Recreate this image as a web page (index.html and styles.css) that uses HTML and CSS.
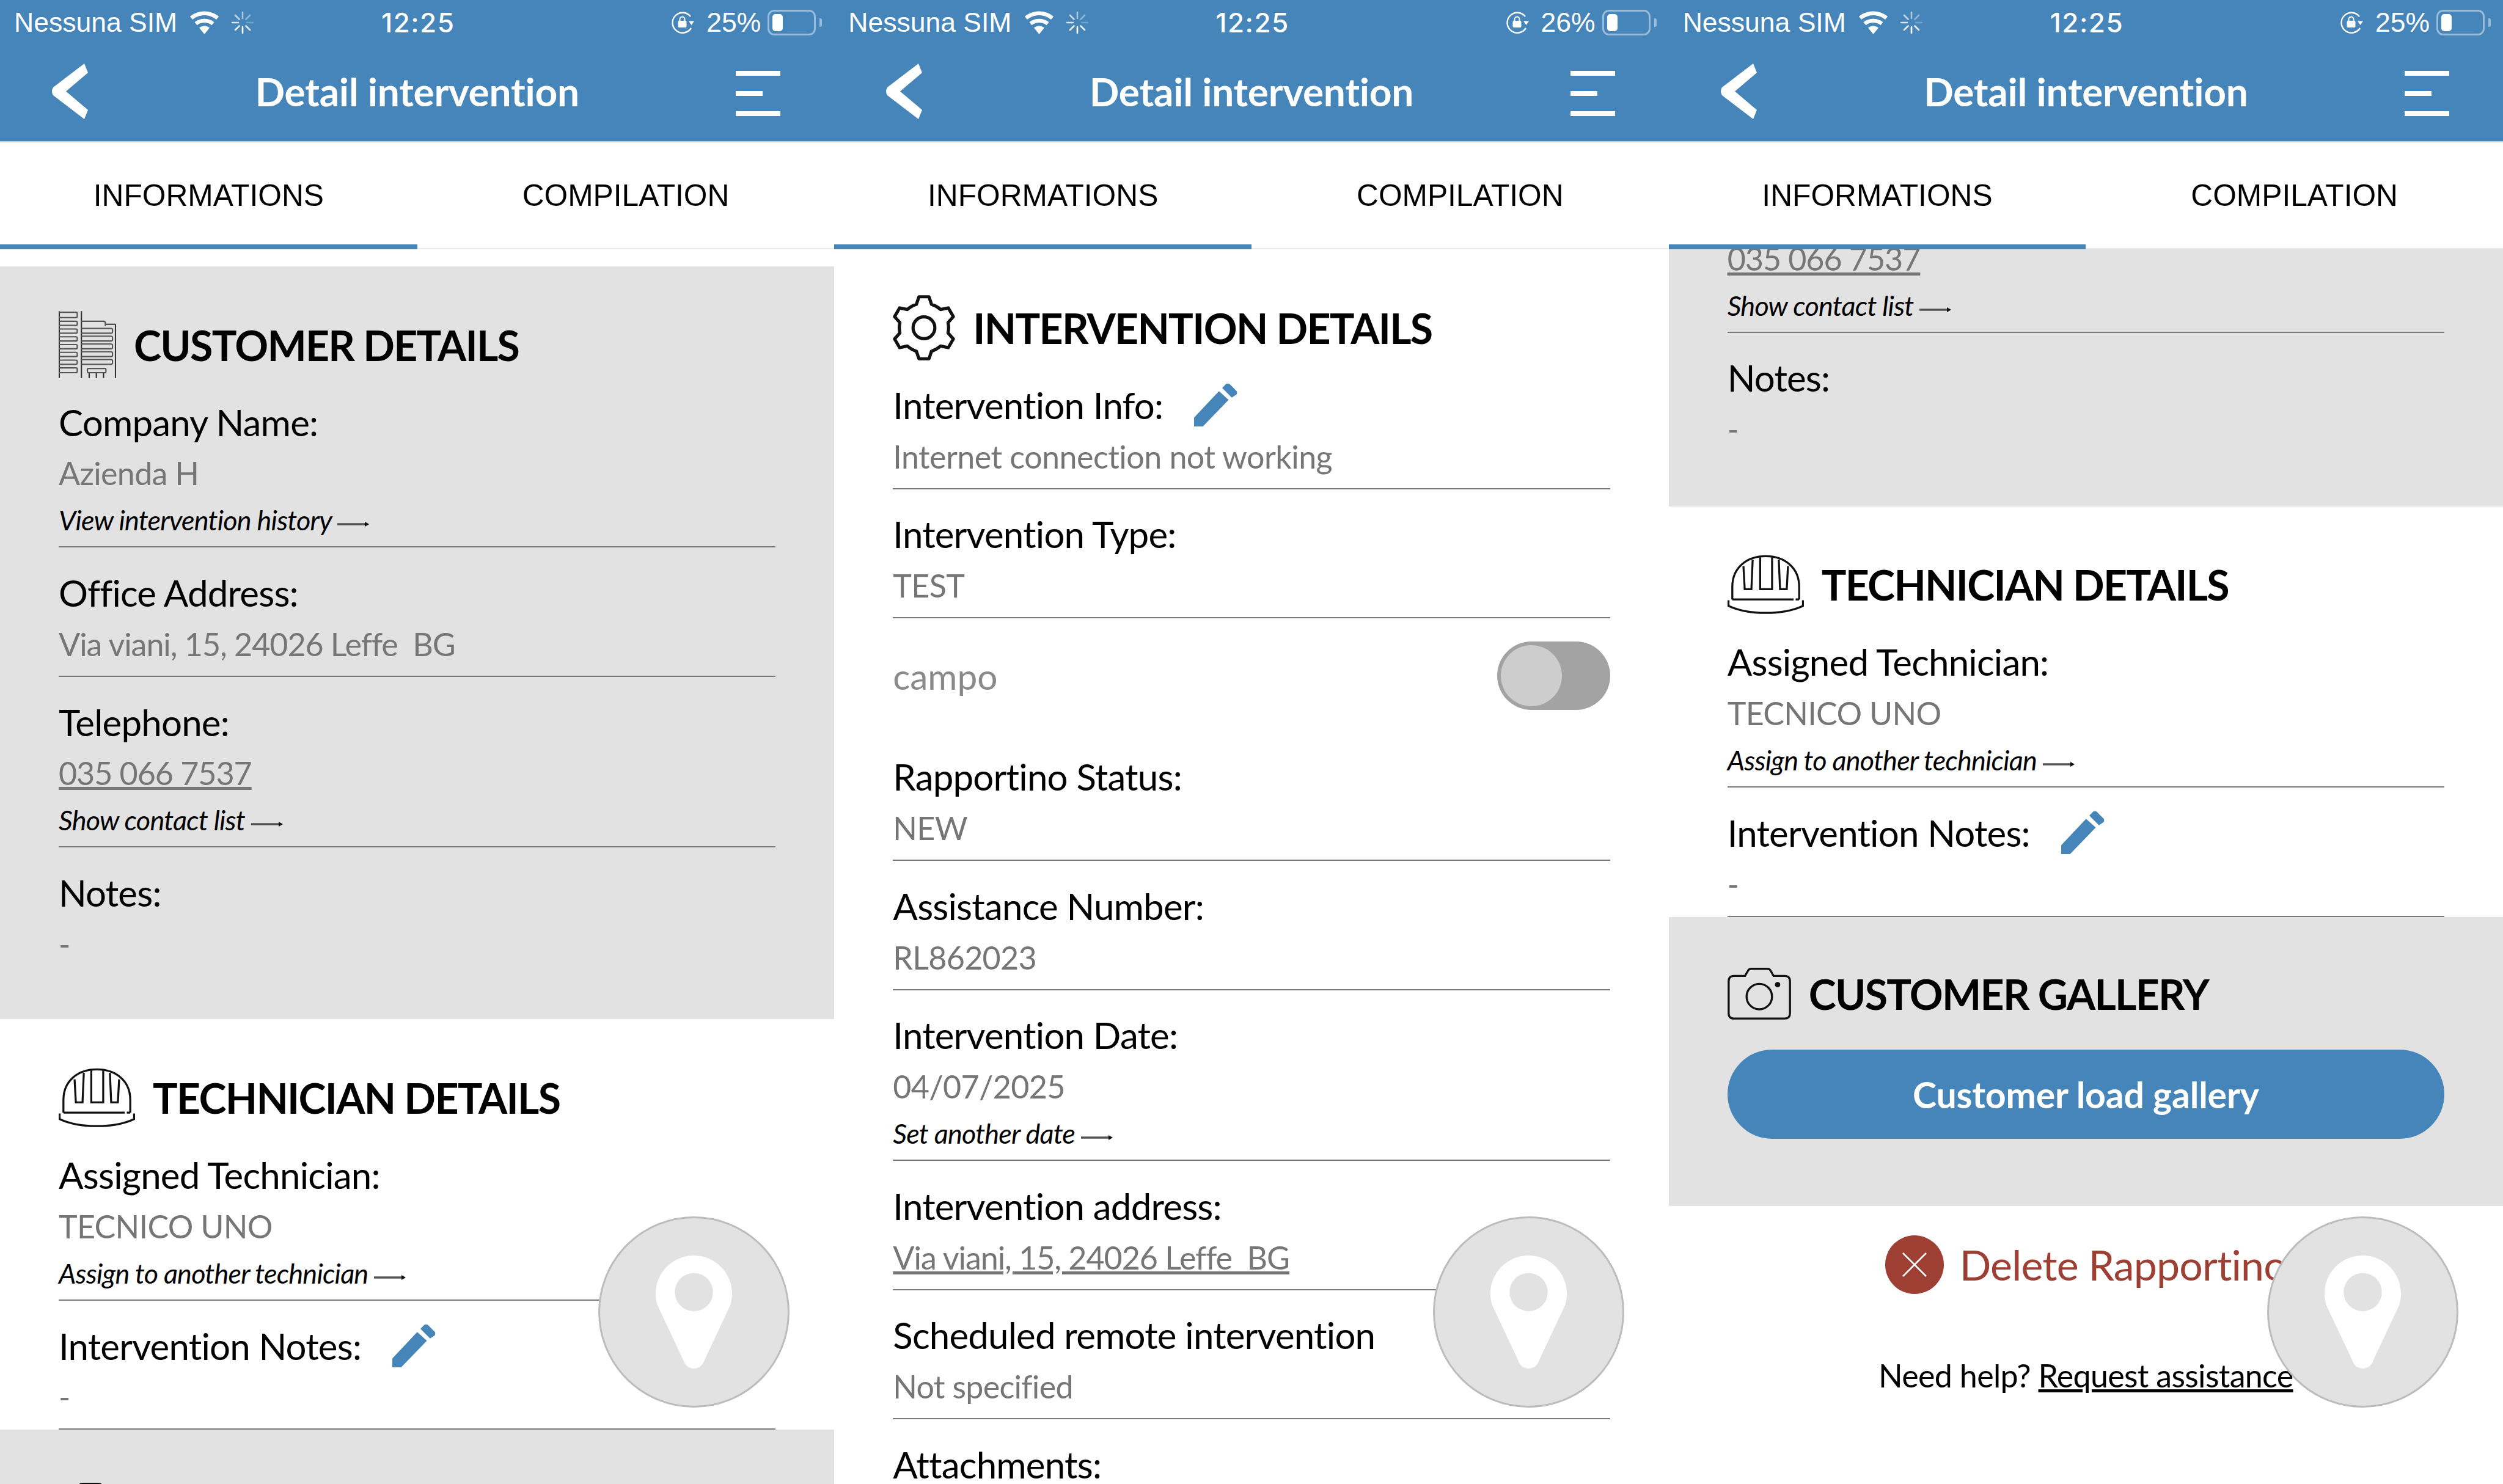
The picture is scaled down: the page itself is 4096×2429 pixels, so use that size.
FILE: index.html
```html
<!DOCTYPE html>
<html lang="en">
<head>
<meta charset="utf-8">
<title>Detail intervention</title>
<link rel="stylesheet" href="styles.css">
</head>
<body>
<svg class="defs" aria-hidden="true">
  <symbol id="i-wifi" viewBox="0 0 55 39">
    <path d="M27.5 39 19 28.5C24 24.5 31 24.5 36 28.5Z" fill="#fff"/>
    <path d="M15.5 24.2 11.5 19.2C20.5 11.8 34.5 11.8 43.5 19.2L39.5 24.2C32.5 18.6 22.5 18.6 15.5 24.2Z" fill="#fff"/>
    <path d="M8 15 4 10C17.5-1.5 37.5-1.5 51 10L47 15C35.5 5.5 19.5 5.5 8 15Z" fill="#fff"/>
  </symbol>
  <symbol id="i-spin" viewBox="0 0 38 38">
    <g stroke="#fff" stroke-width="2.6" stroke-linecap="round">
      <path d="M19 2V12" opacity=".55"/><path d="M31 7 24.500 13.500" opacity=".4"/><path d="M36 19H26" opacity=".25"/>
      <path d="M31 31 24.500 24.500" opacity=".9"/><path d="M19 36V26"/><path d="M7 31 13.500 24.500" opacity=".95"/>
      <path d="M2 19H12" opacity=".8"/><path d="M7 7 13.500 13.500" opacity=".7"/>
    </g>
  </symbol>
  <symbol id="i-lock" viewBox="0 0 38 38">
    <path d="M32 9A16.500 16.500 0 1 0 33 28" fill="none" stroke="#fff" stroke-width="2.4"/>
    <path d="M29 16.500 38 16.500 33.500 23Z" fill="#fff"/>
    <rect x="11.500" y="16" width="14" height="11" rx="2" fill="#fff"/>
    <path d="M14.500 16.500V13.500A4 4 0 0 1 22.500 13.500V16.500" fill="none" stroke="#fff" stroke-width="2"/>
  </symbol>
  <symbol id="i-back" viewBox="0 0 59 91">
    <path d="M53 0 59 15 23 45.500 59 76 53 91 2 52Q-2 45.500 2 39Z" fill="#fff"/>
  </symbol>
  <symbol id="i-arrow" viewBox="0 0 52 10">
    <path d="M0 5H46" stroke="#555" stroke-width="3.400"/>
    <path d="M45 1 52 5 45 9Z" fill="#111"/>
  </symbol>
  <symbol id="i-pencil" viewBox="0 0 27 27">
    <path d="M0 27V21.500L15.500 5 21.500 10.500 5.500 27Z" fill="#4585b9"/>
    <path d="M17.500 3 20 .5Q21 0 22 .5L26.500 5Q27 6 26.500 7L23.500 9Z" fill="#4585b9"/>
  </symbol>
  <symbol id="i-pin" viewBox="0 0 48 71">
    <path d="M24 0C37.300 0 48 10.700 48 24C48 27 47.500 29 47 31L31 65C29.500 69.500 27 71 24 71C21 71 18.500 69.500 17 65L1 31C.5 29 0 27 0 24C0 10.700 10.700 0 24 0Z" fill="#fff"/>
    <circle cx="24" cy="23" r="12" fill="#e2e2e2"/>
  </symbol>
  <symbol id="i-building" viewBox="0 0 96 112">
    <g fill="none" stroke="#555" stroke-width="2.200">
      <path d="M1 0V112M38 0V112M95 22V112M78 22H95" stroke="#333"/>
      <path d="M1 2H29Q31 2 31 4V9Q31 11 29 11H1M1 17H29Q31 17 31 19V22Q31 24 29 24H1M1 30H29Q31 30 31 32V35Q31 37 29 37H1M1 43H29Q31 43 31 45V48Q31 50 29 50H1M1 56H29Q31 56 31 58V61Q31 63 29 63H1M1 69H29Q31 69 31 71V74Q31 76 29 76H1M1 82H29Q31 82 31 84V87Q31 89 29 89H1M1 95H29Q31 95 31 97V101Q31 103 29 103H1"/>
      <path d="M38 17H75Q78 17 78 20V25M38 29H87Q90 29 90 31V35Q90 37 87 37H38M38 42H87Q90 42 90 44V48Q90 50 87 50H38M38 55H87Q90 55 90 57V61Q90 63 87 63H38M38 68H87Q90 68 90 70V74Q90 76 87 76H38M38 81H87Q90 81 90 83V87Q90 89 87 89H38"/>
      <rect x="48" y="96" width="31" height="7" rx="2"/>
      <path d="M51 103V112M63 103V112M75 103V112" stroke="#333"/>
    </g>
  </symbol>
  <symbol id="i-helmet" viewBox="0 0 48 37">
    <g fill="none" stroke="#111" stroke-width="1.250">
      <path d="M3 28V20C3 8 12 .8 24 .8S45 8 45 20V28"/>
      <path d="M3 28H41.500M42.800 28H45"/>
      <path d="M.6 28.500V32Q10 36.400 24 36.400T47.400 32V28.500"/>
      <path d="M20.500 1.500V21.500H28V1.500"/>
      <path d="M10 7 10.800 21.500H15L15.800 3M38 7 37.200 21.500H33L32.200 3"/>
    </g>
  </symbol>
  <symbol id="i-gear" viewBox="1.500 .5 37 39">
    <g fill="none" stroke="#111" stroke-width="1.900" stroke-linejoin="round">
      <path d="M15.500 6 17 1.500H23L24.500 6A14.700 14.700 0 0 1 29.870 9.100L34.520 8.150 37.520 13.350 34.370 16.900A14.700 14.700 0 0 1 34.370 23.100L37.520 26.650 34.520 31.850 29.870 30.900A14.700 14.700 0 0 1 24.500 34L23 38.500H17L15.500 34A14.700 14.700 0 0 1 10.130 30.900L5.480 31.850 2.480 26.650 5.630 23.100A14.700 14.700 0 0 1 5.630 16.900L2.480 13.350 5.480 8.150 10.130 9.100A14.700 14.700 0 0 1 15.500 6Z"/>
      <circle cx="20" cy="20" r="6.500"/>
    </g>
  </symbol>
  <symbol id="i-camera" viewBox="0 0 40 33">
    <g fill="none" stroke="#111" stroke-width="1.300">
      <path d="M4 5.500H11L13 2Q13.500 1 15 1H25Q26.500 1 27 2L29 5.500H36Q39.300 5.500 39.300 9V29Q39.300 32.300 36 32.300H4Q.7 32.300.7 29V9Q.7 5.500 4 5.500Z"/>
      <circle cx="20" cy="18.500" r="8"/>
    </g>
    <circle cx="31.500" cy="11" r="1.700" fill="#111"/>
  </symbol>
</svg>

<main class="screens">

  <section class="phone">
    <div class="status">
      <div class="status-left">Nessuna SIM <svg class="ic-wifi"><use href="#i-wifi"/></svg><svg class="ic-spin"><use href="#i-spin"/></svg></div>
      <div class="status-time">12:25</div>
      <div class="status-right"><svg class="ic-lock"><use href="#i-lock"/></svg><span>25%</span><div class="battery"><div class="battery-level"></div></div></div>
    </div>
    <header class="navbar">
      <svg class="ic-back"><use href="#i-back"/></svg>
      <h1 class="nav-title">Detail intervention</h1>
      <div class="menu"><i></i><i class="short"></i><i></i></div>
    </header>
    <nav class="tabs"><div class="tab active">INFORMATIONS</div><div class="tab">COMPILATION</div></nav>
    <div class="content">
      <section class="block gray first">
        <h2 class="block-title"><svg class="ic-building"><use href="#i-building"/></svg>CUSTOMER DETAILS</h2>
        <div class="field"><div class="label">Company Name:</div><div class="value">Azienda H</div><div class="more">View intervention history <svg class="ic-arrow"><use href="#i-arrow"/></svg></div></div>
        <div class="field"><div class="label">Office Address:</div><div class="value addr">Via viani, 15, 24026 Leffe&nbsp; BG</div></div>
        <div class="field"><div class="label">Telephone:</div><div class="value"><u>035 066 7537</u></div><div class="more">Show contact list <svg class="ic-arrow"><use href="#i-arrow"/></svg></div></div>
        <div class="field plain"><div class="label">Notes:</div><div class="value">-</div></div>
      </section>
      <section class="block">
        <h2 class="block-title"><svg class="ic-helmet"><use href="#i-helmet"/></svg>TECHNICIAN DETAILS</h2>
        <div class="field"><div class="label">Assigned Technician:</div><div class="value">TECNICO UNO</div><div class="more">Assign to another technician <svg class="ic-arrow"><use href="#i-arrow"/></svg></div></div>
        <div class="field"><div class="label">Intervention Notes:<svg class="ic-pencil"><use href="#i-pencil"/></svg></div><div class="value">-</div></div>
      </section>
      <section class="block gray">
        <div class="block-title"><svg class="ic-camera"><use href="#i-camera"/></svg></div>
      </section>
    </div>
    <div class="fab"><svg class="ic-pin"><use href="#i-pin"/></svg></div>
  </section>

  <section class="phone">
    <div class="status">
      <div class="status-left">Nessuna SIM <svg class="ic-wifi"><use href="#i-wifi"/></svg><svg class="ic-spin"><use href="#i-spin"/></svg></div>
      <div class="status-time">12:25</div>
      <div class="status-right"><svg class="ic-lock"><use href="#i-lock"/></svg><span>26%</span><div class="battery"><div class="battery-level"></div></div></div>
    </div>
    <header class="navbar">
      <svg class="ic-back"><use href="#i-back"/></svg>
      <h1 class="nav-title">Detail intervention</h1>
      <div class="menu"><i></i><i class="short"></i><i></i></div>
    </header>
    <nav class="tabs"><div class="tab active">INFORMATIONS</div><div class="tab">COMPILATION</div></nav>
    <div class="content">
      <section class="block">
        <h2 class="block-title"><svg class="ic-gear"><use href="#i-gear"/></svg>INTERVENTION DETAILS</h2>
        <div class="field"><div class="label">Intervention Info:<svg class="ic-pencil"><use href="#i-pencil"/></svg></div><div class="value wide">Internet connection not working</div></div>
        <div class="field"><div class="label">Intervention Type:</div><div class="value">TEST</div></div>
        <div class="toggle-row"><span class="toggle-label">campo</span><div class="toggle"><div class="toggle-thumb"></div></div></div>
        <div class="field"><div class="label">Rapportino Status:</div><div class="value">NEW</div></div>
        <div class="field"><div class="label">Assistance Number:</div><div class="value">RL862023</div></div>
        <div class="field"><div class="label">Intervention Date:</div><div class="value">04/07/2025</div><div class="more">Set another date <svg class="ic-arrow"><use href="#i-arrow"/></svg></div></div>
        <div class="field"><div class="label">Intervention address:</div><div class="value"><u>Via viani, 15, 24026 Leffe&nbsp; BG</u></div></div>
        <div class="field"><div class="label">Scheduled remote intervention</div><div class="value">Not specified</div></div>
        <div class="field plain"><div class="label">Attachments:</div></div>
      </section>
    </div>
    <div class="fab"><svg class="ic-pin"><use href="#i-pin"/></svg></div>
  </section>

  <section class="phone">
    <div class="status">
      <div class="status-left">Nessuna SIM <svg class="ic-wifi"><use href="#i-wifi"/></svg><svg class="ic-spin"><use href="#i-spin"/></svg></div>
      <div class="status-time">12:25</div>
      <div class="status-right"><svg class="ic-lock"><use href="#i-lock"/></svg><span>25%</span><div class="battery"><div class="battery-level"></div></div></div>
    </div>
    <header class="navbar">
      <svg class="ic-back"><use href="#i-back"/></svg>
      <h1 class="nav-title">Detail intervention</h1>
      <div class="menu"><i></i><i class="short"></i><i></i></div>
    </header>
    <nav class="tabs"><div class="tab active">INFORMATIONS</div><div class="tab">COMPILATION</div></nav>
    <div class="content">
      <section class="block gray scrolled">
        <div class="field headless"><div class="value"><u>035 066 7537</u></div><div class="more">Show contact list <svg class="ic-arrow"><use href="#i-arrow"/></svg></div></div>
        <div class="field plain"><div class="label">Notes:</div><div class="value">-</div></div>
      </section>
      <section class="block">
        <h2 class="block-title"><svg class="ic-helmet"><use href="#i-helmet"/></svg>TECHNICIAN DETAILS</h2>
        <div class="field"><div class="label">Assigned Technician:</div><div class="value">TECNICO UNO</div><div class="more">Assign to another technician <svg class="ic-arrow"><use href="#i-arrow"/></svg></div></div>
        <div class="field"><div class="label">Intervention Notes:<svg class="ic-pencil"><use href="#i-pencil"/></svg></div><div class="value">-</div></div>
      </section>
      <section class="block gray gallery">
        <h2 class="block-title"><svg class="ic-camera"><use href="#i-camera"/></svg>CUSTOMER GALLERY</h2>
        <button class="gallery-btn">Customer load gallery</button>
      </section>
      <div class="delete-row">
        <svg class="ic-delete" viewBox="0 0 96 96"><circle cx="48" cy="48" r="48" fill="#9e3f33"/><path d="M29 29 67 67M67 29 29 67" stroke="#fff" stroke-width="2.600"/></svg>
        <span>Delete Rapportino</span>
      </div>
      <p class="help">Need help? <u>Request assistance</u></p>
    </div>
    <div class="fab"><svg class="ic-pin"><use href="#i-pin"/></svg></div>
  </section>

</main>
</body>
</html>
```

FILE: styles.css
```css
* { box-sizing: border-box; }
html, body { margin: 0; padding: 0; height: 100%; overflow: hidden; background: #fff; }
body { font-family: "Lato", "Liberation Sans", sans-serif; color: #000; }
.defs { position: absolute; width: 0; height: 0; }

.screens { display: grid; grid-template-columns: repeat(3, 1fr); height: 100vh; }
.phone { position: relative; display: flex; flex-direction: column; height: 100vh; overflow: hidden; background: #fff; }

/* status bar */
.status { display: grid; grid-template-columns: 1fr auto 1fr; align-items: center; height: 73px; padding: 0 20px 0 23px; background: #4585b9; color: #fff; font-family: "Liberation Sans", sans-serif; font-size: 44.5px; }
.status-left { display: flex; align-items: center; white-space: pre; }
.ic-wifi { width: 55px; height: 39px; margin-left: 5px; }
.ic-spin { width: 38px; height: 38px; margin-left: 16px; }
.status-time { font-family: "Inter", sans-serif; font-weight: 500; font-size: 44px; letter-spacing: 1.5px; }
.status-right { display: flex; align-items: center; justify-content: flex-end; }
.ic-lock { width: 38px; height: 38px; margin-right: 20px; }
.battery { position: relative; width: 79px; height: 42px; margin-left: 11px; margin-right: 10px; border: 3px solid rgba(255,255,255,.45); border-radius: 11px; }
.battery::after { content: ""; position: absolute; right: -13px; top: 11px; width: 4px; height: 14px; background: rgba(255,255,255,.45); border-radius: 0 3px 3px 0; }
.battery-level { position: absolute; left: 5px; top: 4px; width: 17px; height: 28px; background: #fff; border-radius: 5px; }

/* navbar */
.navbar { display: flex; align-items: center; justify-content: center; position: relative; height: 160px; background: #4585b9; border-bottom: 2px solid #cbc8c4; }
.ic-back { position: absolute; left: 85px; top: 31px; width: 59px; height: 91px; }
.nav-title { margin: 0 0 6px; font-size: 64px; font-weight: 700; letter-spacing: -.25px; color: #fff; }
.menu { position: absolute; right: 88px; top: 43px; display: flex; flex-direction: column; align-items: flex-start; gap: 25px; width: 73px; }
.menu i { display: block; width: 73px; height: 8px; background: #fff; }
.menu i.short { width: 44px; }

/* tabs */
.tabs { display: flex; height: 175px; flex: none; border-bottom: 2px solid #e8e8e8; }
.tab { flex: 1; display: flex; align-items: center; justify-content: center; font-family: "Liberation Sans", sans-serif; font-size: 49.7px; color: #000; }
.tab.active { margin-bottom: -2px; border-bottom: 8px solid #4585b9; padding-top: 6px; }

/* content */
.content { flex: 1; min-height: 0; overflow: hidden; }
.block { padding: 75.7px 96px 0; }
.block.gray { background: #e2e2e2; }
.block.first { margin-top: 27.6px; padding-bottom: 0; }
.block.scrolled { padding-top: 0; padding-bottom: 3px; }
.block-title { display: flex; align-items: center; gap: 29px; height: 105.5px; margin: 0; font-size: 68px; font-weight: 700; letter-spacing: -1.7px; white-space: nowrap; }
.ic-building { width: 94px; height: 110px; flex: none; }
.ic-helmet { width: 125px; height: 97px; flex: none; }
.ic-gear { width: 102px; height: 107px; flex: none; }
.ic-camera { width: 104px; height: 86px; flex: none; }

.field { padding: 32px 0 9px; border-bottom: 2px solid #7a7a7a; }
.field.plain { border-bottom: 0; padding-bottom: 80.5px; }
.field.headless { padding-top: 0; margin-top: -27.5px; }
.label { display: flex; align-items: center; height: 83.5px; font-size: 60px; letter-spacing: -.8px; white-space: nowrap; }
.value { height: 85px; line-height: 85px; font-size: 52px; letter-spacing: -.7px; color: #767676; white-space: nowrap; }
.value.wide { letter-spacing: -.55px; }
.value.addr, .value u { letter-spacing: -1.05px; }
.more { height: 68px; line-height: 68px; font-size: 45px; font-style: italic; letter-spacing: -.8px; white-space: nowrap; }
.ic-arrow { width: 52px; height: 10px; vertical-align: 5px; }
.ic-pencil { width: 71px; height: 71px; margin-left: 51px; }

.toggle-row { display: flex; align-items: center; justify-content: space-between; height: 185.5px; padding-top: 2px; }
.toggle-label { font-size: 58.500px; color: #8a8a8a; }
.toggle { width: 185px; height: 112px; padding: 6px; border-radius: 56px; background: #a3a3a3; }
.toggle-thumb { width: 100px; height: 100px; border-radius: 50%; background: #cdcdcd; }

.block.gallery { padding-top: 73px; padding-bottom: 109.7px; }
.gallery-btn { display: block; width: 100%; height: 146px; margin-top: 39px; border: 0; border-radius: 73px; background: #4585b9; color: #fff; font-family: "Lato", sans-serif; font-size: 59px; font-weight: 700; letter-spacing: -.2px; }

.delete-row { display: flex; align-items: center; justify-content: center; gap: 26px; margin-top: 48px; color: #9e3f33; font-size: 68px; letter-spacing: -.8px; white-space: nowrap; }
.ic-delete { width: 96px; height: 96px; flex: none; }
.help { margin: 91px 0 0; text-align: center; font-size: 52px; letter-spacing: -.7px; line-height: 84px; }

/* location button */
.fab { position: absolute; right: 73px; bottom: 125px; display: flex; align-items: center; justify-content: center; width: 313px; height: 313px; border-radius: 50%; background: #e2e2e2; border: 3px solid #bcbcbc; }
.ic-pin { width: 125px; height: 185px; }
```
